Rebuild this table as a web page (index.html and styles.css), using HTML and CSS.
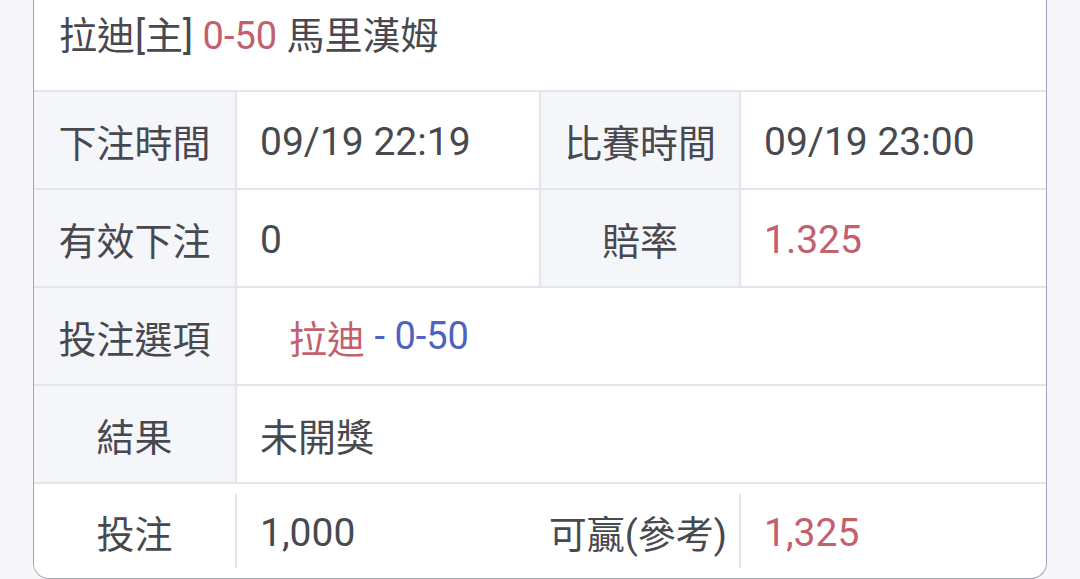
FILE: index.html
```html
<!DOCTYPE html>
<html lang="zh-Hant">
<head>
<meta charset="utf-8">
<link rel="stylesheet" href="styles.css">
</head>
<body>
<div class="card">
  <div class="head">拉迪[主] <span class="red">0-50</span> 馬里漢姆</div>
  <div class="row">
    <div class="lbl">下注時間</div>
    <div class="val">09/19 22:19</div>
    <div class="lbl mid">比賽時間</div>
    <div class="val">09/19 23:00</div>
  </div>
  <div class="row">
    <div class="lbl">有效下注</div>
    <div class="val">0</div>
    <div class="lbl mid">賠率</div>
    <div class="val red">1.325</div>
  </div>
  <div class="row">
    <div class="lbl">投注選項</div>
    <div class="val wide indent"><span class="red">拉迪</span>&nbsp;<span class="blue">- 0-50</span></div>
  </div>
  <div class="row">
    <div class="lbl">結果</div>
    <div class="val wide cjk">未開獎</div>
  </div>
  <div class="row last">
    <div class="lbl">投注</div>
    <div class="val sep">1,000</div>
    <div class="lbl right">可贏(參考)</div>
    <div class="val sep red">1,325</div>
  </div>
</div>
</body>
</html>
```

FILE: styles.css
```css
html, body {
  margin: 0;
  padding: 0;
  background: #f7f7fa;
  height: 579px;
  overflow: hidden;
}

body {
  font-family: "Roboto", "Noto Sans CJK TC", sans-serif;
  color: #47494f;
  font-size: 38px;
}

.card {
  margin-left: 33px;
  width: 1012px;
  background: #ffffff;
  border: 1px solid #a3a3b8;
  border-top: none;
  border-radius: 0 0 16px 16px;
  overflow: hidden;
}

.head {
  height: 90px;
  box-sizing: border-box;
  padding: 14px 0 0 25px;
  line-height: 44px;
}

.row {
  display: grid;
  grid-template-columns: 201px 304px 200px 1fr;
  border-top: 2px solid #e3e4ec;
  height: 96px;
}

.row.last {
  height: 94px;
}

.lbl {
  background: #f5f6fa;
  display: flex;
  align-items: center;
  justify-content: center;
}

.lbl.mid {
  border-left: 2px solid #e3e4ec;
}

.val {
  display: flex;
  align-items: center;
  padding-left: 23px;
  padding-top: 3px;
  border-left: 2px solid #e3e4ec;
  font-size: 39px;
}

.val.cjk {
  font-size: 38px;
  padding-top: 0;
}

.val.wide {
  grid-column: 2 / 5;
}

.val.indent {
  padding-left: 52px;
  padding-top: 0;
  font-size: 38px;
}

.last .lbl {
  background: #ffffff;
}

.last .lbl.right {
  justify-content: flex-end;
  padding-right: 12px;
}

.last .val.sep {
  margin: 10px 0;
  border-left: 2px solid #e2e2e8;
}

.red {
  color: #c2606d;
}

.blue {
  color: #4d62c2;
}
```
